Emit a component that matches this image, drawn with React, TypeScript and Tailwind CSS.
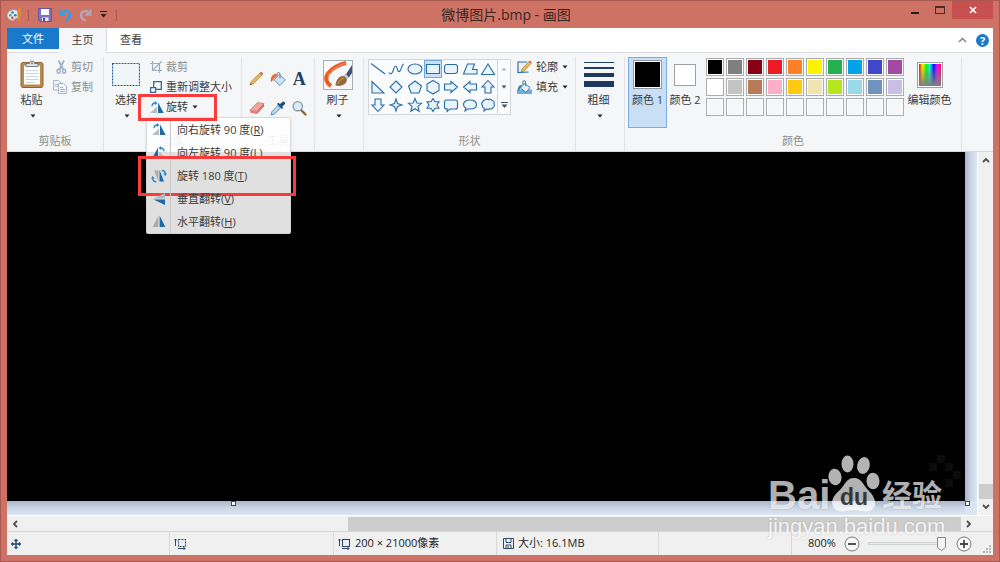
import React from "react";

type Kids = { children?: React.ReactNode };

function Caret({ className = "fill-[#222]" }: { className?: string }) {
  return (
    <svg width="6" height="4" viewBox="0 0 6 4" className={className} aria-hidden="true">
      <path d="M0.5 0.5h5L3 3.5z" />
    </svg>
  );
}

function Group({ label, className, children }: Kids & { label: string; className: string }) {
  return (
    <section
      aria-label={label || undefined}
      className={`flex shrink-0 flex-col border-r border-[#e1e3e5] ${className}`}
    >
      <div className="flex flex-1">{children}</div>
      <div className="h-5 text-center leading-5 text-[#8f8f8f]">{label}</div>
    </section>
  );
}

function BigButton({
  icon,
  label,
  className,
  caret = true,
}: {
  icon: React.ReactNode;
  label: string;
  className: string;
  caret?: boolean;
}) {
  return (
    <button type="button" className={`flex shrink-0 flex-col items-center ${className}`}>
      <span className="flex h-[35px] items-center justify-center">{icon}</span>
      <span className="leading-4 whitespace-nowrap">{label}</span>
      {caret && (
        <span className="ml-[2px] flex h-4 items-center">
          <Caret />
        </span>
      )}
    </button>
  );
}

function RowButton({
  icon,
  label,
  caret,
  disabled,
}: {
  icon: React.ReactNode;
  label: string;
  caret?: boolean;
  disabled?: boolean;
}) {
  return (
    <button
      type="button"
      disabled={disabled}
      className="flex h-5 items-center gap-1 whitespace-nowrap disabled:text-[#8d8d8d]"
    >
      {icon}
      <span className="leading-4">{label}</span>
      {caret && <Caret />}
    </button>
  );
}

/* ---------- icons ---------- */

function PaintLogo() {
  return (
    <svg width="14" height="15" viewBox="0 0 14 15" aria-hidden="true">
      <path d="M6.5 3C3 3 .6 5.5.6 8.3c0 3 2.400 4.900 5 4.900 1.700 0 1.600-1.400 2.600-1.900 1.300-.6 4.500.4 4.500-3.300C12.700 5 10 3 6.500 3z" fill="#dcecf5" stroke="#a9c9da" strokeWidth=".8" />
      <circle cx="3.300" cy="8.300" r="1.300" fill="#4aa758" />
      <circle cx="5.500" cy="5.500" r="1.300" fill="#2b7fd0" />
      <circle cx="5.300" cy="10.800" r="1.200" fill="#d33c2e" />
      <circle cx="8.300" cy="8.300" r="1.300" fill="#3b6fb5" />
      <path d="M10.800 14l-.5-9L11.500.8l2 .2.300 4-1 9z" fill="#e28b26" />
    </svg>
  );
}

function Floppy() {
  return (
    <svg width="14" height="14" viewBox="0 0 14 14" aria-hidden="true">
      <path d="M.5.5h13v13H2L.5 12z" fill="#8172bb" stroke="#6656a0" />
      <path d="M3 1h8v6H3z" fill="#fff" />
      <path d="M4 9.500h6.500V13H4z" fill="#e9e6f4" />
      <path d="M5 10h2v3H5z" fill="#57478f" />
    </svg>
  );
}

function UndoArrow({ redo }: { redo?: boolean }) {
  return (
    <svg width="13" height="14" viewBox="0 0 13 14" className={redo ? "-scale-x-100" : ""} aria-hidden="true">
      <path d="M3 4.500C6.500 1.600 11 3.500 10.900 7.300 10.800 10 9 11.700 6.200 12.300" fill="none" stroke={redo ? "#b3a5b4" : "#3a9de0"} strokeWidth="2.600" />
      <path d="M.5.5v7.300h7.300z" fill={redo ? "#b3a5b4" : "#3a9de0"} />
    </svg>
  );
}

function Clipboard() {
  return (
    <svg width="24" height="29" viewBox="0 0 24 29" aria-hidden="true">
      <rect x="1" y="2.500" width="22" height="25" rx="2" fill="#b98a4c" stroke="#8d6630" />
      <path d="M4 5.500h16v19H4z" fill="#fbfcfd" />
      <path d="M5.500 10.500h13M5.500 13.500h13M5.500 16.500h13M5.500 19.500h13M5.500 22.500h9" stroke="#cdd5dc" />
      <path d="M6 6.500V3.500h3.500a2.500 2.500 0 0 1 5 0H18v3z" fill="#dfe3e6" stroke="#69727a" strokeWidth=".9" />
      <circle cx="12" cy="3.300" r=".9" fill="#69727a" />
    </svg>
  );
}

function Scissors() {
  return (
    <svg width="11" height="14" viewBox="0 0 11 14" fill="none" stroke="#a1b0c4" aria-hidden="true">
      <path d="M2.500.5l4.800 9M8 .5L3.500 9.500" strokeWidth="1.700" />
      <ellipse cx="2.600" cy="11.200" rx="1.600" ry="2" strokeWidth="1.400" />
      <ellipse cx="8.100" cy="11.200" rx="1.600" ry="2" strokeWidth="1.400" />
    </svg>
  );
}

function Copy() {
  return (
    <svg width="14" height="14" viewBox="0 0 14 14" fill="#f3f6fa" stroke="#a5b5ca" aria-hidden="true">
      <path d="M.5.5h5l2.500 2.500v7H.5z" />
      <path d="M2 4.500h4M2 6.500h4" />
      <path d="M5.500 3.500h5l3 3v7h-8z" />
      <path d="M7 7.500h3M7 9.500h5M7 11.500h5" />
    </svg>
  );
}

function SelectBox() {
  return (
    <svg width="28" height="23" viewBox="0 0 28 23" aria-hidden="true">
      <rect x=".5" y=".5" width="27" height="22" fill="#f0f5fa" stroke="#1f5f9a" strokeWidth="1.200" strokeDasharray="2 1" />
    </svg>
  );
}

function Crop() {
  return (
    <svg width="12" height="12" viewBox="0 0 12 12" fill="none" stroke="#9aabc2" strokeWidth="1.200" aria-hidden="true">
      <path d="M2.500 0v9.500H12M0 2.500h9.500V12M11.500.5L2.500 9.500" />
    </svg>
  );
}

function Resize() {
  return (
    <svg width="12" height="12" viewBox="0 0 12 12" fill="#f4f9fd" stroke="#2b6a9f" aria-hidden="true">
      <path d="M3.700.7h7.600v7.600H3.700z" strokeWidth="1.300" />
      <path d="M.6 6.600h5v4.800h-5z" strokeWidth="1.200" />
    </svg>
  );
}

function RotateRight({ left }: { left?: boolean }) {
  return (
    <svg width="14" height="13" viewBox="0 0 14 13" className={left ? "-scale-x-100" : ""} aria-hidden="true">
      <path d="M8 1.500V12h5.700z" fill="#1c6ba8" />
      <path d="M7 12H0L7 5.500z" fill="#b9bdc1" />
      <path d="M2 5.200C2.200 2.800 3.600 1.800 5.500 2" fill="none" stroke="#2f86cf" strokeWidth="1.400" />
      <path d="M4.800.1L7.500 2.100 4.800 4.200z" fill="#2f86cf" />
    </svg>
  );
}

function Rotate180() {
  return (
    <svg width="16" height="14" viewBox="0 0 16 14" aria-hidden="true">
      <path d="M8.500 1v11.500h4.500z" fill="#1c6ba8" />
      <path d="M7.500 12.500V1.500H3z" fill="#a9adb1" />
      <path d="M10.800 1.500c2 0 3.400 1 3.400 3M5.200 12.700c-2 0-3.400-1-3.400-3" fill="none" stroke="#2f86cf" strokeWidth="1.500" />
      <path d="M12.200 4.200H16l-1.800 3zM0 9.800h3.700L1.800 6.800z" fill="#2f86cf" />
    </svg>
  );
}

function FlipV() {
  return (
    <svg width="14" height="14" viewBox="0 0 14 14" aria-hidden="true">
      <path d="M13 7.500V13L1.500 7.500z" fill="#1c6ba8" />
      <path d="M13 6.500V1L1.500 6.500z" fill="#b4b8bc" />
    </svg>
  );
}

function FlipH() {
  return (
    <svg width="14" height="13" viewBox="0 0 14 13" aria-hidden="true">
      <path d="M7.600.5V12h5.700z" fill="#1c6ba8" />
      <path d="M6.400.5V12H.7z" fill="#a9adb1" />
    </svg>
  );
}

const toolIcons: { name: string; svg: React.ReactNode }[] = [
  {
    name: "铅笔",
    svg: (
      <svg width="15" height="15" viewBox="0 0 15 15" aria-hidden="true">
        <path d="M1 14l1.300-3.600L11 2l2 2-8.500 8.700z" fill="#e9b858" stroke="#a97a2b" strokeWidth=".7" />
        <path d="M11 2l1.300-1.200 2 2L13 4z" fill="#c95c50" />
        <path d="M1 14l.7-1.800 1.100 1.100z" fill="#333" />
      </svg>
    ),
  },
  {
    name: "用颜色填充",
    svg: (
      <svg width="16" height="16" viewBox="0 0 16 16" aria-hidden="true">
        <path d="M9 3.500l6.300 5.200-5.300 5.800-6-5.500z" fill="#cfe3f0" stroke="#6b96b5" />
        <path d="M10 7.500V3a1.500 1.500 0 0 0-3 0v3" fill="none" stroke="#5a86a8" />
        <path d="M7.500 3C3 2.500.3 5 .8 11c2 0 1.800-3 4.200-4z" fill="#e4683a" />
      </svg>
    ),
  },
  {
    name: "文本",
    svg: <span className="font-['Liberation_Serif',serif] text-[18px] leading-4 font-bold text-[#1d3f63]">A</span>,
  },
  {
    name: "橡皮擦",
    svg: (
      <svg width="16" height="14" viewBox="0 0 16 14" aria-hidden="true">
        <path d="M1 9l7.500-7.500 6.500 1L8 10.500z" fill="#f0a49d" stroke="#c97670" strokeWidth=".7" />
        <path d="M1 9l7 1.500V13L1.300 11.800z" fill="#e37f78" />
        <path d="M8 10.500l7-8v2.800L8 13z" fill="#cf6a63" />
      </svg>
    ),
  },
  {
    name: "颜色选取器",
    svg: (
      <svg width="16" height="16" viewBox="0 0 16 16" aria-hidden="true">
        <path d="M1 15l1-3.500L8 5.500l2.500 2.500-6 6z" fill="#b6dbf0" stroke="#47789b" strokeWidth=".8" />
        <path d="M7 4l5 5 1.200-1.200-1-1L15 4c.8-1-.9-3-2-2.500L10 4 8.200 2.800z" fill="#1f4f7c" />
      </svg>
    ),
  },
  {
    name: "放大镜",
    svg: (
      <svg width="15" height="16" viewBox="0 0 15 16" aria-hidden="true">
        <path d="M8.500 9.500l5 5" stroke="#8a6840" strokeWidth="2.400" strokeLinecap="round" />
        <circle cx="5.800" cy="6.200" r="4.600" fill="#d9ecf8" stroke="#8b97a3" strokeWidth="1.400" />
      </svg>
    ),
  },
];

function Brush() {
  return (
    <svg width="30" height="30" viewBox="0 0 30 30" aria-hidden="true">
      <rect x=".5" y=".5" width="29" height="29" fill="#f6f8fa" stroke="#a9aeb3" />
      <path d="M23 3C17 4 9 8 5 13.500 1.500 18.500 3.500 23 8 26" fill="none" stroke="#ee5a24" strokeWidth="4" />
      <path d="M22 3.500C15 5.500 7.500 10 5 16" fill="none" stroke="#f7936a" strokeWidth="1" />
      <path d="M22.500 15L29 5v8l-3.500 5z" fill="#3c557a" />
      <path d="M20 16l2.500-2.500 3.500 4-2.500 2.500z" fill="#c3c9d0" />
      <path d="M12.500 25.500c0-4 3-9.500 7-9.500 3.500.5 5.500 3.500 3.500 6.500-2 3-6.500 4-10.500 3z" fill="#94683b" />
      <path d="M14.500 24c1.500-3 3.500-5 6-6" stroke="#c9a26e" fill="none" />
    </svg>
  );
}

const shapes: { name: string; d: string }[] = [
  { name: "直线", d: "M1 2.500L15 13" },
  { name: "曲线", d: "M.8 11.500C3 14.500 4.500 12 5.500 8.500S8 3.500 9 7s1.500 4.500 3 3 1.500-5.500 3.500-7" },
  { name: "椭圆", d: "M8 3C12 3 15 5.200 15 8S12 13 8 13 1 10.800 1 8 4 3 8 3z" },
  { name: "矩形", d: "M1.500 3.500h13v9h-13z" },
  { name: "圆角矩形", d: "M4 3.500h8a2.500 2.500 0 0 1 2.500 2.500v4a2.500 2.500 0 0 1-2.500 2.500H4A2.500 2.500 0 0 1 1.500 10V6A2.500 2.500 0 0 1 4 3.500z" },
  { name: "多边形", d: "M5.500 3h7L10.500 8.500h4.500v4.500H1.500z" },
  { name: "三角形", d: "M8 3l6.500 10.500h-13z" },
  { name: "直角三角形", d: "M2 2.500v11.500h12z" },
  { name: "菱形", d: "M8 2l6 6-6 6-6-6z" },
  { name: "五边形", d: "M8 2l6.500 5-2.500 7H4L1.500 7z" },
  { name: "六边形", d: "M8 1.500l6 3.500v6.500L8 15l-6-3.500V5z" },
  { name: "右箭头", d: "M1.500 5h6.500V2.500L14.500 8 8 13.500V11H1.500z" },
  { name: "左箭头", d: "M14.500 5H8V2.500L1.500 8 8 13.500V11h6.500z" },
  { name: "上箭头", d: "M8 1.500L14 8h-3v6H5V8H2z" },
  { name: "下箭头", d: "M8 14.500L14 8h-3V2H5v6H2z" },
  { name: "四角星", d: "M8 2l1.500 4.500L14 8l-4.500 1.500L8 14l-1.500-4.500L2 8l4.500-1.500z" },
  { name: "五角星", d: "M8 1.500l1.900 4.500 4.600.3-3.500 3.100 1.200 4.900L8 11.700l-4.200 2.600L5 9.400 1.500 6.300l4.600-.3z" },
  { name: "六角星", d: "M8 1.500l2 3.200h4L12 8l2 3.300h-4L8 14.500l-2-3.200H2L4 8 2 4.700h4z" },
  { name: "圆角标注", d: "M3.500 3h9a2 2 0 0 1 2 2v5a2 2 0 0 1-2 2H7l-3 2.500.3-2.500h-.8a2 2 0 0 1-2-2V5a2 2 0 0 1 2-2z" },
  { name: "椭圆标注", d: "M8 3c4 0 6.500 1.900 6.500 4.500S12 12 8 12c-.8 0-1.500 0-2-.2L3 14l.8-3C2.300 10.200 1.500 9 1.500 7.500 1.500 4.900 4 3 8 3z" },
  { name: "云形标注", d: "M5 3c1-1.200 2.500-1 3.300-.3C9.500 1.800 11.500 2 12 3.500c1.800.2 2.600 1.800 2 3.300.9 1.300.3 3-.9 3.400-.3 1.600-2 2.300-3.400 1.500-1 .8-2.200.8-3 .3L4 14l.3-2.700C2.800 11 2 9.800 2.500 8.500 1.200 7.500 1.300 5.700 2.700 5 2.800 3.700 3.800 2.900 5 3z" },
];

function OutlineIcon() {
  return (
    <svg width="15" height="14" viewBox="0 0 15 14" aria-hidden="true">
      <path d="M10 2H1v10.500L11.500 12" fill="#eaf3fa" stroke="#2d6ea5" strokeWidth="1.200" />
      <path d="M4 12l1-3 7-7.500 2 2L7 11z" fill="#eabf62" stroke="#a0722a" strokeWidth=".7" />
      <path d="M12 1.500l1-1 1.700 1.800L14 3.500z" fill="#cc5a4e" />
    </svg>
  );
}

function FillIcon() {
  return (
    <svg width="15" height="15" viewBox="0 0 15 15" aria-hidden="true">
      <path d="M0 9.500h15V14H0z" fill="#69b0e2" />
      <path d="M7.500 3.500l5.500 4-4 5-5.500-4.500z" fill="#e6f2fa" stroke="#40799f" />
      <path d="M8.500 6V2a1.300 1.300 0 0 0-2.600 0v3" fill="none" stroke="#40799f" />
      <path d="M5 5C2 5 .5 7 .8 11c1.500 0 1.700-2 2.700-3z" fill="#3f7fb2" />
    </svg>
  );
}

function Thickness() {
  return (
    <span className="flex w-[30px] flex-col gap-1">
      <span className="h-px bg-[#1f3f66]" />
      <span className="h-[2px] bg-[#1f3f66]" />
      <span className="h-1 bg-[#1f3a5f]" />
      <span className="h-[6px] bg-[#1f3a5f]" />
    </span>
  );
}

const palette = [
  "bg-black", "bg-[#7f7f7f]", "bg-[#880015]", "bg-[#ed1c24]", "bg-[#ff7f27]",
  "bg-[#fff200]", "bg-[#22b14c]", "bg-[#00a2e8]", "bg-[#3f48cc]", "bg-[#a349a4]",
  "bg-white", "bg-[#c3c3c3]", "bg-[#b97a57]", "bg-[#ffaec9]", "bg-[#ffc90e]",
  "bg-[#efe4b0]", "bg-[#b5e61d]", "bg-[#99d9ea]", "bg-[#7092be]", "bg-[#c8bfe7]",
];
const swatches = [...palette, ...Array<string>(10).fill("bg-[#f5f6f7]")];

const menu: { text: string; key: string; icon: React.ReactNode; marked?: boolean }[] = [
  { text: "向右旋转 90 度", key: "R", icon: <RotateRight /> },
  { text: "向左旋转 90 度", key: "L", icon: <RotateRight left /> },
  { text: "旋转 180 度", key: "T", icon: <Rotate180 />, marked: true },
  { text: "垂直翻转", key: "V", icon: <FlipV /> },
  { text: "水平翻转", key: "H", icon: <FlipH /> },
];

/* ---------- sections ---------- */

function TitleBar() {
  return (
    <header className="grid h-[27px] shrink-0 grid-cols-[1fr_auto_1fr]">
      <div className="flex items-center">
        <PaintLogo />
        <span className="ml-[7px] h-3 w-px bg-[#a8584e]" />
        <button type="button" aria-label="保存" className="ml-[9px]"><Floppy /></button>
        <button type="button" aria-label="撤消" className="ml-[7px]"><UndoArrow /></button>
        <button type="button" aria-label="重做" className="ml-[7px]"><UndoArrow redo /></button>
        <button type="button" aria-label="自定义快速访问工具栏" className="ml-2">
          <svg width="7" height="7" viewBox="0 0 7 7" aria-hidden="true">
            <path d="M0 .5h7" stroke="#222" />
            <path d="M.5 3h6L3.500 6.500z" fill="#222" />
          </svg>
        </button>
        <span className="ml-[9px] h-3 w-px bg-[#a8584e]" />
      </div>
      <h1 className="pl-3 text-[14px] leading-[27px] text-[#3a2522]">微博图片.bmp - 画图</h1>
      <div className="flex items-start justify-end">
        <button type="button" aria-label="最小化" className="flex h-[18px] w-[25px] items-center justify-center pt-[5px]">
          <span className="h-[2px] w-2 bg-[#2b1b19]" />
        </button>
        <button type="button" aria-label="最大化" className="flex h-[18px] w-[25px] items-center justify-center">
          <span className="h-[8px] w-[10px] border border-t-2 border-[#4b2b27]" />
        </button>
        <button type="button" aria-label="关闭" className="flex h-[18px] w-[41px] items-center justify-center bg-[#c75050]">
          <svg width="8" height="8" viewBox="0 0 8 8" aria-hidden="true">
            <path d="M1 1l6 6M7 1L1 7" stroke="#fff" strokeWidth="1.600" />
          </svg>
        </button>
      </div>
    </header>
  );
}

function TabBar() {
  return (
    <nav className="flex h-[25px] shrink-0 bg-white">
      <div className="border-b border-[#dadbdc]">
        <button type="button" className="h-[21px] w-[52px] bg-[#1979ca] leading-[21px] text-white">文件</button>
      </div>
      <button type="button" className="w-12 border-r border-[#dadbdc] bg-[#f5f6f7]">主页</button>
      <div className="flex flex-1 items-center border-b border-[#dadbdc] pr-1">
        <button type="button" className="w-12">查看</button>
        <button type="button" aria-label="最小化功能区" className="mr-[9px] ml-auto">
          <svg width="9" height="6" viewBox="0 0 9 6" fill="none" stroke="#8b8b8b" strokeWidth="1.600" aria-hidden="true">
            <path d="M1 5l3.500-3.500L8 5" />
          </svg>
        </button>
        <button
          type="button"
          aria-label="帮助"
          className="size-[13px] rounded-full bg-[#1979ca] text-center text-[11px] leading-[13px] font-bold text-white"
        >
          ?
        </button>
      </div>
    </nav>
  );
}

function RotateMenu() {
  return (
    <div className="relative">
      <RowButton icon={<span className="-mr-[2px]"><RotateRight /></span>} label="旋转" caret />
      <div className="absolute top-5 left-[-4px] z-20 w-[145px] rounded-[2px] border border-[#cfcfcf]/80 bg-white/88 shadow-sm">
        {menu.map((item) => (
          <button key={item.key} type="button" className="relative flex h-[23px] w-full items-center whitespace-nowrap">
            <span className="flex h-full w-6 items-center justify-center border-r border-[#c9c9c9]">{item.icon}</span>
            <span className="pl-[6px] leading-4">
              {item.text}(<u>{item.key}</u>)
            </span>
            {item.marked && (
              <span className="pointer-events-none absolute -top-2 -right-[6px] -bottom-[9px] -left-[9px] border-[3px] border-[#f93b3b]" />
            )}
          </button>
        ))}
      </div>
      <span className="pointer-events-none absolute -top-[3px] -left-3 z-30 h-[27px] w-[79px] border-[3px] border-[#f93b3b]" />
    </div>
  );
}

function ShapeGallery() {
  return (
    <div className="mt-[2px] flex h-[56px] w-[143px] border border-[#d3d6d9] bg-[#fafbfc]">
      <div className="grid flex-1 grid-cols-7 grid-rows-3">
        {shapes.map((s, i) => (
          <button
            key={s.name}
            type="button"
            aria-label={s.name}
            className={`flex items-center justify-center ${i === 3 ? "border border-[#6ea8e0] bg-[#cbe0f7]" : ""}`}
          >
            <svg
              width="16"
              height="16"
              viewBox="0 0 16 16"
              className="shrink-0"
              fill={i < 2 ? "none" : "#e9f3fa"}
              stroke="#2a6da6"
              strokeWidth="1.100"
              aria-hidden="true"
            >
              <path d={s.d} />
            </svg>
          </button>
        ))}
      </div>
      <div className="flex w-[13px] flex-col border-l border-[#d3d6d9]">
        <button type="button" aria-label="上一行" className="flex flex-1 items-center justify-center">
          <Caret className="rotate-180 fill-[#b5b8bb]" />
        </button>
        <button type="button" aria-label="下一行" className="flex flex-1 items-center justify-center">
          <Caret className="fill-[#44546a]" />
        </button>
        <button type="button" aria-label="更多形状" className="flex flex-1 items-center justify-center">
          <svg width="7" height="7" viewBox="0 0 7 7" aria-hidden="true">
            <path d="M0 .5h7" stroke="#44546a" />
            <path d="M.5 2.500h6L3.500 6z" fill="#44546a" />
          </svg>
        </button>
      </div>
    </div>
  );
}

function Ribbon() {
  return (
    <div className="flex h-[99px] shrink-0 border-b border-[#d5d7d9] bg-[#f5f6f7] pt-1">
      <Group label="剪贴板" className="w-[97px]">
        <BigButton icon={<Clipboard />} label="粘贴" className="w-[49px]" />
        <div className="flex flex-col">
          <RowButton icon={<Scissors />} label="剪切" disabled />
          <RowButton icon={<span className="-ml-[3px]"><Copy /></span>} label="复制" disabled />
        </div>
      </Group>

      <Group label="图像" className="w-[138px]">
        <BigButton icon={<SelectBox />} label="选择" className="w-11" />
        <div className="flex flex-col items-start pl-[2px]">
          <RowButton icon={<Crop />} label="裁剪" disabled />
          <RowButton icon={<Resize />} label="重新调整大小" />
          <RotateMenu />
        </div>
      </Group>

      <Group label="工具" className="w-[73px]">
        <div className="mt-[7px] grid h-[58px] flex-1 grid-cols-3 px-1">
          {toolIcons.map((t) => (
            <button key={t.name} type="button" aria-label={t.name} className="flex items-center justify-center">
              {t.svg}
            </button>
          ))}
        </div>
      </Group>

      <Group label="" className="w-[49px]">
        <BigButton icon={<Brush />} label="刷子" className="w-[45px]" />
      </Group>

      <Group label="形状" className="w-[212px]">
        <div className="flex gap-[6px] pl-1">
          <ShapeGallery />
          <div className="flex flex-col">
            <RowButton icon={<OutlineIcon />} label="轮廓" caret />
            <RowButton icon={<FillIcon />} label="填充" caret />
          </div>
        </div>
      </Group>

      <Group label="" className="w-[49px]">
        <BigButton icon={<Thickness />} label="粗细" className="w-[45px]" />
      </Group>

      <Group label="颜色" className="w-[337px]">
        <BigButton
          icon={<span className="size-[29px] border border-[#8d9aa8] bg-white p-px"><span className="block size-full bg-black" /></span>}
          label="颜色 1"
          caret={false}
          className="ml-[3px] h-[71px] w-[39px] bg-[#c9dff6] outline -outline-offset-1 outline-[#7aaee2]"
        />
        <BigButton
          icon={<span className="size-[22px] border border-[#a0a0a0] bg-white" />}
          label="颜色 2"
          caret={false}
          className="w-9"
        />
        <div className="mt-px ml-[3px] grid h-[58px] grid-cols-10 gap-[2px]">
          {swatches.map((c, i) => (
            <button key={i} type="button" aria-label={`调色板 ${i + 1}`} className="size-[18px] border border-[#acacac] bg-white p-px">
              <span className={`block size-full ${c}`} />
            </button>
          ))}
        </div>
        <BigButton
          icon={
            <span className="size-[26px] border border-[#a0a0a0] bg-white p-px">
              <span className="block size-full bg-[linear-gradient(to_top,#808080,transparent),linear-gradient(to_right,#f00,#ff0,#0f0,#0ff,#00f,#f0f,#f04)]" />
            </span>
          }
          label="编辑颜色"
          caret={false}
          className="w-[51px]"
        />
      </Group>
    </div>
  );
}

function Chevron({ className = "" }: { className?: string }) {
  return (
    <svg width="8" height="6" viewBox="0 0 8 6" className={className} fill="none" stroke="#505050" strokeWidth="1.800" aria-hidden="true">
      <path d="M1 1l3 3 3-3" />
    </svg>
  );
}

function Watermark() {
  return (
    <div className="pointer-events-none absolute right-[49px] bottom-[-9px] z-10 flex w-[176px] flex-col font-['Liberation_Sans','Noto_Sans_CJK_SC',sans-serif] whitespace-nowrap text-white/70 [text-shadow:0_0_2px_#0003]">
      <div className="flex h-[59px] items-end">
        <span className="w-[60px] text-[40px] leading-[38px] font-bold">Bai</span>
        <svg width="54" height="59" viewBox="0 0 54 59" className="shrink-0" aria-hidden="true">
          <g fill="#fff" fillOpacity=".7">
            <ellipse cx="7" cy="22" rx="6.500" ry="8.300" transform="rotate(-8 7 22)" />
            <ellipse cx="19.500" cy="9" rx="6" ry="8.500" />
            <ellipse cx="35.500" cy="10.500" rx="6.300" ry="8.500" transform="rotate(12 35.500 10.500)" />
            <ellipse cx="45" cy="26" rx="6.500" ry="8.300" transform="rotate(-4 45 26)" />
            <path d="M26 23c-8 0-9 7-14 12-5 4-9 9-7.500 15 2 7 9 7 14.500 6 4-.9 10-.9 14 0 6 1 12 1 14-6 1-6-3-11-7-15-5-5-6-12-14-12z" />
          </g>
          <text x="26" y="50" textAnchor="middle" fontFamily="Liberation Sans" fontWeight="bold" fontSize="23" fill="#111" fillOpacity=".75">
            du
          </text>
        </svg>
        <span className="text-[30px] leading-[36px] font-bold">经验</span>
      </div>
      <span className="text-[22px] leading-[26px] text-white/85">jingyan.baidu.com</span>
    </div>
  );
}

function Workspace() {
  return (
    <main className="flex min-h-0 flex-1">
      <div className="relative grid min-w-0 flex-1 grid-cols-[1fr_12px] grid-rows-[1fr_14px] bg-[#dbe5f2]">
        <div className="flex items-end justify-end bg-black pr-1 pb-[14px]">
          <svg width="32" height="32" viewBox="0 0 32 32" fill="#0c0c0c" aria-hidden="true">
            <path d="M8 0h8v8H8zM0 8h8v8H0zM16 8h8v8h-8zM24 16h8v8h-8zM16 24h8v8h-8z" />
          </svg>
        </div>
        <div className="bg-linear-to-r from-[#a9b5c9] via-[#cbd6e6] to-[#dbe5f2]" />
        <div className="bg-linear-to-b from-[#a9b5c9] via-[#cbd6e6] to-[#dbe5f2]" />
        <span className="absolute bottom-[9px] left-[224px] size-[5px] border border-[#444] bg-white" />
        <span className="absolute right-[7px] bottom-[9px] size-[5px] border border-[#444] bg-white" />
      </div>
      <div className="flex w-4 flex-col items-center border-l border-white bg-[#f0f0f0]">
        <button type="button" aria-label="向上滚动" className="flex h-[15px] items-center">
          <Chevron className="rotate-180" />
        </button>
        <span className="mt-auto h-[15px] w-[14px] bg-[#cdcdcd]" />
        <button type="button" aria-label="向下滚动" className="flex h-4 items-center">
          <Chevron />
        </button>
      </div>
    </main>
  );
}

function HorizontalScroll() {
  return (
    <div className="relative flex h-4 shrink-0 items-center border-t border-white bg-[#f0f0f0] pr-4">
      <button type="button" aria-label="向左滚动" className="flex w-4 justify-center">
        <Chevron className="rotate-90" />
      </button>
      <div className="flex h-[14px] flex-1 justify-end">
        <span className="h-full w-[65.4%] bg-[#cdcdcd]" />
      </div>
      <button type="button" aria-label="向右滚动" className="flex w-4 justify-center">
        <Chevron className="-rotate-90" />
      </button>
      <Watermark />
    </div>
  );
}

function StatusCell({ children, className }: Kids & { className: string }) {
  return <div className={`flex items-center gap-1 border-r border-[#d9d9d9] ${className}`}>{children}</div>;
}

function SizeIcon({ dashed }: { dashed?: boolean }) {
  return (
    <svg width="13" height="12" viewBox="0 0 13 12" fill="none" stroke="#2c4a6e" aria-hidden="true">
      <rect x="4.500" y="1.500" width="7" height="7" strokeDasharray={dashed ? "2 1" : undefined} strokeWidth="1.100" />
      <path d="M1.500 1v7M0 2.500L1.500 1 3 2.500M4 10.500h7M9.500 9L11 10.500 9.500 12" />
    </svg>
  );
}

function ZoomButton({ plus }: { plus?: boolean }) {
  return (
    <button type="button" aria-label={plus ? "放大" : "缩小"} className="shrink-0">
      <svg width="16" height="16" viewBox="0 0 16 16" fill="#f8f8f8" stroke="#777" aria-hidden="true">
        <circle cx="8" cy="8" r="7" />
        <path d={plus ? "M4 8h8M8 4v8" : "M4 8h8"} stroke="#444" strokeWidth="1.800" />
      </svg>
    </button>
  );
}

function StatusBar() {
  return (
    <footer className="flex h-6 shrink-0 border-t border-[#d7d7d7] bg-[#f0f0f0] text-[#1e1e1e]">
      <StatusCell className="w-[163px] pl-1">
        <svg width="10" height="10" viewBox="0 0 10 10" stroke="#24456b" strokeWidth="1.300" fill="none" aria-hidden="true">
          <path d="M5 .7v8.600M.7 5h8.600M3.500 2L5 .6 6.500 2M3.500 8L5 9.400 6.500 8M2 3.500L.6 5 2 6.500M8 3.500L9.400 5 8 6.500" />
        </svg>
      </StatusCell>
      <StatusCell className="w-[164px] pl-1"><SizeIcon dashed /></StatusCell>
      <StatusCell className="w-[163px] pl-1">
        <SizeIcon />
        <span>200 × 21000像素</span>
      </StatusCell>
      <StatusCell className="w-[162px] pl-[6px]">
        <svg width="11" height="11" viewBox="0 0 11 11" fill="none" stroke="#2c4a6e" aria-hidden="true">
          <path d="M.5.5h10v10H.5zM3 .5v4h5v-4M3 10.500v-3.500h5v3.500M5 8v2" />
        </svg>
        <span>大小: 16.1MB</span>
      </StatusCell>
      <StatusCell className="flex-1" />
      <div className="flex items-center pl-4">
        <span className="w-[36px]">800%</span>
        <ZoomButton />
        <div className="relative mx-2 h-5 w-[80px]">
          <svg width="80" height="20" viewBox="0 0 80 20" aria-hidden="true">
            <path d="M.5 8.500h77v2H.5z" fill="#e7eaea" stroke="#cfd2d2" />
            <path d="M69.500 3.500h8v10l-4 3-4-3z" fill="#f3f3f3" stroke="#8a8a8a" />
          </svg>
          <input type="range" aria-label="缩放" min={0} max={100} defaultValue={95} className="absolute inset-0 w-full opacity-0" />
        </div>
        <ZoomButton plus />
      </div>
      <div className="flex w-[21px] items-end justify-end p-[2px]">
        <svg width="8" height="8" viewBox="0 0 8 8" fill="#b9b9b9" aria-hidden="true">
          <path d="M6 0h2v2H6zM3 3h2v2H3zM6 3h2v2H6zM0 6h2v2H0zM3 6h2v2H3zM6 6h2v2H6z" />
        </svg>
      </div>
    </footer>
  );
}

export default function App() {
  return (
    <div className="flex h-screen flex-col overflow-hidden border border-[#a8584e] bg-[#ce7265] px-[6px] pb-[6px] font-['Open_Sans','Noto_Sans_CJK_SC',sans-serif] text-[11px] text-[#3b3b3b]">
      <TitleBar />
      <TabBar />
      <Ribbon />
      <Workspace />
      <HorizontalScroll />
      <StatusBar />
    </div>
  );
}
